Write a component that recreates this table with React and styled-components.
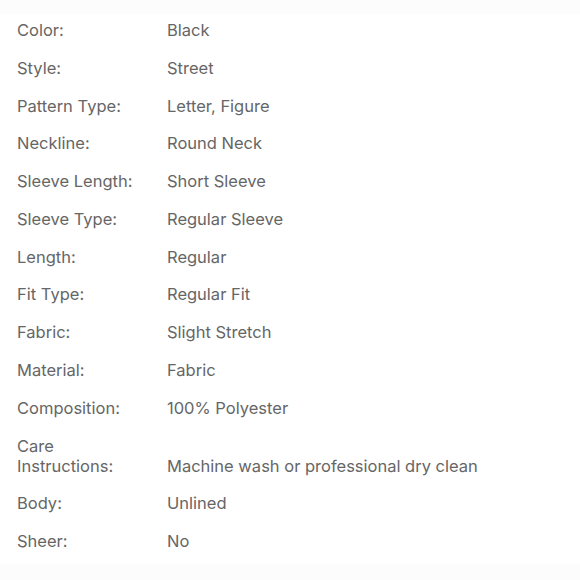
import React from 'react';
import styled, { createGlobalStyle } from 'styled-components';

const GlobalStyle = createGlobalStyle`
  html, body {
    margin: 0;
    padding: 0;
    background: #fcfcfc;
  }
  body {
    font-family: Inter, "Liberation Sans", Arial, sans-serif;
  }
`;

const Page = styled.div`
  width: 580px;
  height: 580px;
  padding-top: 14px;
  box-sizing: border-box;
`;

const Card = styled.div`
  background: #fff;
  width: 580px;
  padding-bottom: 4px;
`;

const Row = styled.div`
  display: flex;
  align-items: flex-end;
  padding: ${p => (p.$first ? '6px' : '8.9px')} 17px 8.9px;
  font-size: 16.5px;
  line-height: 20px;
  color: #666;
`;

const Label = styled.div`
  width: 150px;
  flex-shrink: 0;
  padding-right: 18px;
  box-sizing: border-box;
`;

const Value = styled.div`
  flex: 1;
`;

const specs = [
  ['Color:', 'Black'],
  ['Style:', 'Street'],
  ['Pattern Type:', 'Letter, Figure'],
  ['Neckline:', 'Round Neck'],
  ['Sleeve Length:', 'Short Sleeve'],
  ['Sleeve Type:', 'Regular Sleeve'],
  ['Length:', 'Regular'],
  ['Fit Type:', 'Regular Fit'],
  ['Fabric:', 'Slight Stretch'],
  ['Material:', 'Fabric'],
  ['Composition:', '100% Polyester'],
  ['Care Instructions:', 'Machine wash or professional dry clean'],
  ['Body:', 'Unlined'],
  ['Sheer:', 'No'],
];

export default function App() {
  return (
    <Page>
      <GlobalStyle />
      <Card>
        {specs.map(([label, value], i) => (
          <Row key={label} $first={i === 0}>
            <Label>{label}</Label>
            <Value>{value}</Value>
          </Row>
        ))}
      </Card>
    </Page>
  );
}
